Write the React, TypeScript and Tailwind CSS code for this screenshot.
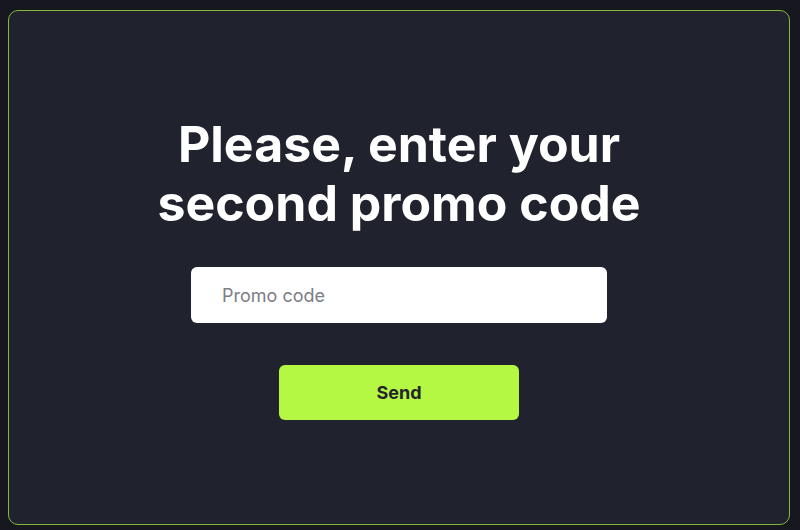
export default function App() {
  return (
    <div className="h-[530px] w-[800px] bg-[#16171f] px-[8px] pt-[10px] pb-[5px] font-['Inter',sans-serif]">
      <div className="flex h-full w-[782px] flex-col items-center justify-center rounded-[10px] border-[1.5px] border-[#84b83a] bg-[#20222e]">
        <h1 className="text-center text-[50px] font-bold leading-[59px] text-white">
          Please, enter your
          <br />
          second promo code
        </h1>
        <input
          type="text"
          placeholder="Promo code"
          className="mt-[34px] h-[56px] w-[416px] rounded-[6px] bg-white pl-[31px] text-[18px] text-[#222] placeholder:text-[#7c7e85] outline-none"
        />
        <button className="mt-[42px] h-[55px] w-[240px] rounded-[6px] bg-[#b5f843] text-[18px] font-bold text-[#24252c]">
          Send
        </button>
      </div>
    </div>
  );
}
